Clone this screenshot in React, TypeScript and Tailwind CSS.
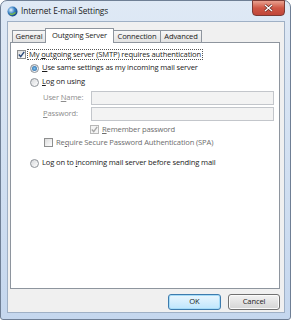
import React from 'react';

const font = { fontFamily: '"Open Sans", "DejaVu Sans", sans-serif' };

const Radio = ({ checked }: { checked?: boolean }) => (
    <span className="relative flex h-[9px] w-[9px] shrink-0 items-center justify-center rounded-full border border-[#8d9298] bg-linear-to-br from-[#d6d8db] to-[#ffffff]">
        {checked && (
            <span className="h-[5px] w-[5px] rounded-full bg-radial from-[#7fc5f0] to-[#1d5a9c]" />
        )}
    </span>
);

const Check = ({ checked, disabled }: { checked?: boolean; disabled?: boolean }) => (
    <span
        className={
            'flex h-[9px] w-[9px] shrink-0 items-center justify-center border ' +
            (disabled
                ? 'border-[#b8b8b8] bg-[#f4f4f4]'
                : 'border-[#8e8f8f] bg-linear-to-br from-[#dcdcdc] to-[#ffffff]')
        }
    >
        {checked && (
            <svg width="7" height="7" viewBox="0 0 7 7">
                <path
                    d="M0.8 3.6 L2.7 5.6 L6.2 0.9"
                    fill="none"
                    stroke={disabled ? '#a8a8a8' : '#2c4a7a'}
                    strokeWidth="1.4"
                />
            </svg>
        )}
    </span>
);

const U = ({ children }: { children: React.ReactNode }) => <span className="underline underline-offset-1">{children}</span>;

export default function App() {
    return (
        <div className="w-[291px] h-[320px] bg-white" style={font}>
            <div className="flex h-[320px] w-[291px] flex-col rounded-t-[7px] rounded-b-[3px] border border-[#6f7f95] bg-linear-to-b from-[#dfe9f5] to-[#c5d7ee]">
                {/* title bar */}
                <div className="relative flex h-[20px] items-center pl-[6px]">
                    <svg width="11" height="11" viewBox="0 0 11 11" className="shrink-0">
                        <defs>
                            <radialGradient id="g" cx="0.35" cy="0.35" r="0.7">
                                <stop offset="0" stopColor="#e8f4ff" />
                                <stop offset="0.5" stopColor="#3e86c8" />
                                <stop offset="1" stopColor="#0f3f7a" />
                            </radialGradient>
                        </defs>
                        <circle cx="5.5" cy="5.5" r="5" fill="url(#g)" />
                        <path d="M3 7.5 Q5 9.5 8.5 6.5" fill="none" stroke="#7bc043" strokeWidth="1.2" />
                    </svg>
                    <span className="ml-[3px] text-[8.3px] tracking-[-0.12px] text-[#1b1b1b]">Internet E-mail Settings</span>
                    <div className="absolute right-[5px] top-[-1px] flex h-[16px] w-[33px] items-center justify-center rounded-b-[4px] border border-[#7b3a34] bg-linear-to-b from-[#e8a08f] via-[#cf5745] to-[#c0463a]">
                        <svg width="9" height="8" viewBox="0 0 9 8">
                            <path d="M1 1 L8 7 M8 1 L1 7" stroke="#5a2520" strokeWidth="2.6" />
                            <path d="M1 1 L8 7 M8 1 L1 7" stroke="#ffffff" strokeWidth="1.4" />
                        </svg>
                    </div>
                </div>

                {/* client */}
                <div className="ml-[6px] flex h-[292px] w-[278px] flex-col border border-[#9fb0c5] bg-[#f0f0f0] text-[7.6px] tracking-[-0.15px]">
                    {/* tabs */}
                    <div className="ml-[2px] mt-[5px] flex h-[15px] items-end text-[#1b1b1b]">
                        <div className="ml-[2px] flex h-[12px] w-[34px] items-center justify-center border border-b-0 border-[#8e959e] bg-linear-to-b from-[#f7f7f7] to-[#e3e3e3]">General</div>
                        <div className="relative z-10 mb-[-1px] ml-[-1px] flex h-[15px] w-[69px] items-start justify-center border border-b-0 border-[#8e959e] bg-white pt-[1px]">Outgoing Server</div>
                        <div className="ml-[-1px] flex h-[12px] w-[48px] items-center justify-center border border-b-0 border-[#8e959e] bg-linear-to-b from-[#f7f7f7] to-[#e3e3e3]">Connection</div>
                        <div className="ml-[-1px] flex h-[12px] w-[42px] items-center justify-center border border-b-0 border-[#8e959e] bg-linear-to-b from-[#f7f7f7] to-[#e3e3e3]">Advanced</div>
                    </div>

                    {/* panel */}
                    <div className="ml-[2px] flex h-[247px] w-[270px] flex-col border border-[#8e959e] bg-white text-[#1b1b1b]">
                        <div className="mt-[5px] flex h-[12px] items-center pl-[6px]">
                            <Check checked />
                            <span className="ml-[1px] border border-dotted border-[#555] px-[1px] leading-[9px]">
                                My <U>o</U>utgoing server (SMTP) requires authentication
                            </span>
                        </div>
                        <div className="mt-[2px] flex h-[12px] items-center pl-[19px]">
                            <Radio checked />
                            <span className="ml-[3px]"><U>U</U>se same settings as my incoming mail server</span>
                        </div>
                        <div className="mt-[2px] flex h-[12px] items-center pl-[19px]">
                            <Radio />
                            <span className="ml-[3px]"><U>L</U>og on using</span>
                        </div>
                        <div className="mt-[3px] flex h-[14px] items-center pl-[32px]">
                            <span className="w-[48px] text-[#8d8d8d]">User <U>N</U>ame:</span>
                            <div className="h-[14px] w-[183px] border border-[#c3c6cb] bg-[#f3f3f3]" />
                        </div>
                        <div className="mt-[2px] flex h-[14px] items-center pl-[32px]">
                            <span className="w-[48px] text-[#8d8d8d]"><U>P</U>assword:</span>
                            <div className="h-[14px] w-[183px] border border-[#c3c6cb] bg-[#f3f3f3]" />
                        </div>
                        <div className="mt-[3px] flex h-[11px] items-center pl-[79px]">
                            <Check checked disabled />
                            <span className="ml-[3px] text-[#6d6d6d]"><U>R</U>emember password</span>
                        </div>
                        <div className="mt-[2px] flex h-[11px] items-center pl-[33px]">
                            <Check />
                            <span className="ml-[3px] text-[#6d6d6d]">Re<U>q</U>uire Secure Password Authentication (SPA)</span>
                        </div>
                        <div className="mt-[9px] flex h-[12px] items-center pl-[19px]">
                            <Radio />
                            <span className="ml-[3px]">Log on to <U>i</U>ncoming mail server before sending mail</span>
                        </div>
                    </div>

                    {/* buttons */}
                    <div className="mt-[5px] flex justify-end gap-[7px] pr-[4px] text-[#1b1b1b]">
                        <button className="flex h-[16px] w-[53px] items-center justify-center rounded-[3px] border border-[#3d7bad] bg-linear-to-b from-[#eaf6fd] to-[#bee6fd] shadow-[inset_0_0_0_1px_#a6dcf8]">OK</button>
                        <button className="flex h-[16px] w-[52px] items-center justify-center rounded-[3px] border border-[#707070] bg-linear-to-b from-[#f2f2f2] to-[#d5d5d5] shadow-[inset_0_0_0_1px_#fbfbfb]">Cancel</button>
                    </div>
                </div>
            </div>
        </div>
    );
}
